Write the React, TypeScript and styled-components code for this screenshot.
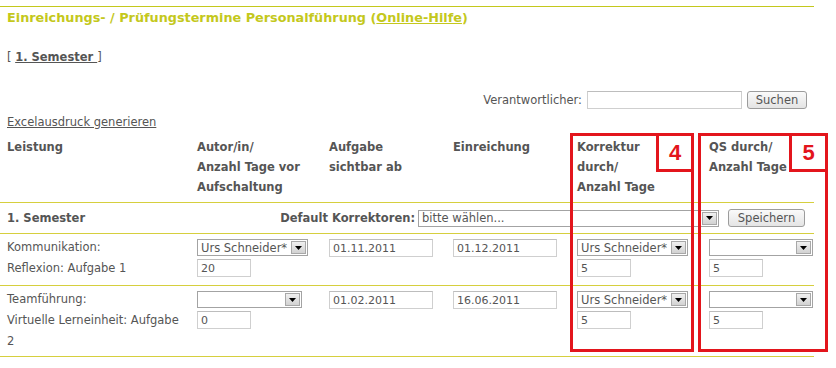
import React from "react";
import styled, { createGlobalStyle } from "styled-components";

const lime = "#c4c81c";
const rule = "#d6cf3e";
const text = "#555555";
const red = "#e3151c";

const GlobalStyle = createGlobalStyle`
  body {
    margin: 0;
    background: #ffffff;
    font-family: "DejaVu Sans", Verdana, sans-serif;
    font-size: 11.5px;
    color: ${text};
  }
`;

const Wrapper = styled.div`
  position: relative;
  padding-top: 6px;
  width: 836px;
  height: 368px;
  overflow: hidden;
`;

const Page = styled.div`
  width: 814px;
  border-top: 1px solid ${lime};
`;

const Title = styled.h1`
  margin: 2px 0 0 7px;
  font-size: 12.8px;
  line-height: 17px;
  font-weight: bold;
  color: ${lime};
  a {
    color: ${lime};
    text-decoration: underline;
  }
`;

const SemesterNav = styled.div`
  margin: 24px 0 0 7px;
  line-height: 14px;
  a {
    color: ${text};
    font-weight: bold;
    text-decoration: underline;
  }
`;

const SearchRow = styled.div`
  margin-top: 27px;
  padding-right: 7px;
  display: flex;
  justify-content: flex-end;
  align-items: center;
  gap: 5px;
  height: 18px;
`;

const TextField = styled.div<{ $w: number }>`
  box-sizing: border-box;
  width: ${({ $w }) => $w}px;
  height: 18px;
  border: 1px solid #cfcfcf;
  border-top-color: #bdbdbd;
  padding: 1px 3px 0;
  line-height: 15px;
  font-size: 11px;
  color: ${text};
  background: #fff;
`;

const Button = styled.button<{ $w: number }>`
  box-sizing: border-box;
  width: ${({ $w }) => $w}px;
  height: 18px;
  padding: 0;
  border: 1px solid #9c9c9c;
  border-radius: 3px;
  background: linear-gradient(#fafafa, #e4e4e4);
  font-family: "DejaVu Sans", Verdana, sans-serif;
  font-size: 11.5px;
  font-weight: normal;
  color: ${text};
`;

const ExcelLink = styled.a`
  display: block;
  margin: 6px 0 0 7px;
  line-height: 14px;
  color: ${text};
  text-decoration: underline;
`;

const cols = "190px 132px 124px 124px 132px 112px";

const HeadRow = styled.div`
  margin-top: 8px;
  display: grid;
  grid-template-columns: ${cols};
  border-bottom: 1px solid ${rule};
  padding-bottom: 5px;
`;

const HeadCell = styled.div`
  padding-left: 7px;
  font-weight: bold;
  line-height: 20px;
  white-space: nowrap;
`;

const SemesterRow = styled.div`
  display: flex;
  align-items: center;
  height: 30px;
  border-bottom: 1px solid ${rule};
  padding-right: 9px;
  font-weight: bold;
`;

const SemesterName = styled.div`
  width: 183px;
  padding-left: 7px;
`;

const DefaultLabel = styled.div`
  flex: 1;
  text-align: right;
  padding-right: 3px;
`;

const DataRow = styled.div`
  display: grid;
  grid-template-columns: ${cols};
  align-items: start;
  border-bottom: 1px solid ${rule};
`;

const LabelCell = styled.div`
  padding: 3px 4px 4px 7px;
  line-height: 21px;
  white-space: nowrap;
`;

const FieldCell = styled.div`
  padding: 5px 0 8px 7px;
  display: flex;
  flex-direction: column;
  gap: 3px;
`;

const SelectBox = styled.div<{ $w: number }>`
  box-sizing: border-box;
  width: ${({ $w }) => $w}px;
  height: 17px;
  border: 1px solid #a3a3a3;
  display: flex;
  align-items: center;
  background: #fff;
  color: ${text};
`;

const SelectText = styled.span`
  flex: 1;
  padding-left: 3px;
  white-space: nowrap;
  overflow: hidden;
  font-weight: normal;
  font-size: 11.5px;
`;

const Arrow = styled.span`
  box-sizing: border-box;
  width: 15px;
  height: 13px;
  margin-right: 1px;
  border: 1px solid #a8a8a8;
  background: linear-gradient(#f0f0f0, #d2d2d2);
  display: flex;
  align-items: center;
  justify-content: center;
`;

const Frame = styled.div<{ $left: number; $w: number }>`
  position: absolute;
  box-sizing: border-box;
  left: ${({ $left }) => $left}px;
  top: 133px;
  width: ${({ $w }) => $w}px;
  height: 219px;
  border: 3px solid ${red};
`;

const Marker = styled.div<{ $w: number }>`
  position: absolute;
  box-sizing: border-box;
  top: -3px;
  right: -3px;
  width: ${({ $w }) => $w}px;
  height: 39px;
  border: 3px solid ${red};
  display: flex;
  align-items: center;
  justify-content: center;
  font-family: "Liberation Sans", Arial, sans-serif;
  font-weight: bold;
  font-size: 22px;
  color: ${red};
`;

const Select = ({ w, value = "" }: { w: number; value?: string }) => (
  <SelectBox $w={w}>
    <SelectText>{value}</SelectText>
    <Arrow>
      <svg width="7" height="4" viewBox="0 0 7 4">
        <path d="M0 0h7L3.5 4z" fill="#000" />
      </svg>
    </Arrow>
  </SelectBox>
);

interface Entry {
  label: string[];
  author: string;
  authorW: number;
  days: string;
  visible: string;
  due: string;
}

const entries: Entry[] = [
  {
    label: ["Kommunikation:", "Reflexion: Aufgabe 1"],
    author: "Urs Schneider*",
    authorW: 111,
    days: "20",
    visible: "01.11.2011",
    due: "01.12.2011",
  },
  {
    label: ["Teamführung:", "Virtuelle Lerneinheit: Aufgabe", "2"],
    author: "",
    authorW: 105,
    days: "0",
    visible: "01.02.2011",
    due: "16.06.2011",
  },
];

export default function App() {
  return (
    <>
      <GlobalStyle />
      <Wrapper>
        <Page>
          <Title>
            Einreichungs- / Prüfungstermine Personalführung (<a href="#">Online-Hilfe</a>)
          </Title>
          <SemesterNav>
            [ <a href="#">1. Semester </a>]
          </SemesterNav>
          <SearchRow>
            <span>Verantwortlicher:</span>
            <TextField $w={155} />
            <Button $w={60}>Suchen</Button>
          </SearchRow>
          <ExcelLink href="#">Excelausdruck generieren</ExcelLink>

          <HeadRow>
            <HeadCell>Leistung</HeadCell>
            <HeadCell>
              Autor/in/
              <br />
              Anzahl Tage vor
              <br />
              Aufschaltung
            </HeadCell>
            <HeadCell>
              Aufgabe
              <br />
              sichtbar ab
            </HeadCell>
            <HeadCell>Einreichung</HeadCell>
            <HeadCell>
              Korrektur
              <br />
              durch/
              <br />
              Anzahl Tage
            </HeadCell>
            <HeadCell>
              QS durch/
              <br />
              Anzahl Tage
            </HeadCell>
          </HeadRow>

          <SemesterRow>
            <SemesterName>1. Semester</SemesterName>
            <DefaultLabel>Default Korrektoren:</DefaultLabel>
            <Select w={301} value="bitte wählen..." />
            <Button $w={77} style={{ marginLeft: 9 }}>
              Speichern
            </Button>
          </SemesterRow>

          {entries.map((e) => (
            <DataRow key={e.label[0]}>
              <LabelCell>
                {e.label.map((l) => (
                  <div key={l}>{l}</div>
                ))}
              </LabelCell>
              <FieldCell>
                <Select w={e.authorW} value={e.author} />
                <TextField $w={54}>{e.days}</TextField>
              </FieldCell>
              <FieldCell>
                <TextField $w={104}>{e.visible}</TextField>
              </FieldCell>
              <FieldCell>
                <TextField $w={104}>{e.due}</TextField>
              </FieldCell>
              <FieldCell>
                <Select w={111} value="Urs Schneider*" />
                <TextField $w={54}>5</TextField>
              </FieldCell>
              <FieldCell>
                <Select w={104} />
                <TextField $w={54}>5</TextField>
              </FieldCell>
            </DataRow>
          ))}
        </Page>

        <Frame $left={570} $w={124}>
          <Marker $w={38}>4</Marker>
        </Frame>
        <Frame $left={698} $w={130}>
          <Marker $w={39}>5</Marker>
        </Frame>
      </Wrapper>
    </>
  );
}
